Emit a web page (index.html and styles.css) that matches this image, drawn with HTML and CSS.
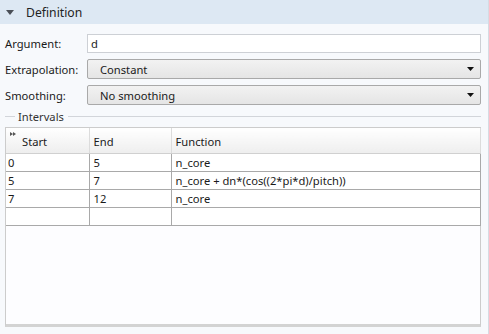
FILE: index.html
```html
<!DOCTYPE html>
<html lang="en">
<head>
    <meta charset="UTF-8">
    <meta name="viewport" content="width=device-width, initial-scale=1.0">
    <title>Definition</title>
    <link rel="stylesheet" href="styles.css">
</head>
<body>
    <div class="panel">
        <div class="section-head">
            <svg class="caret" width="8" height="5" viewBox="0 0 8 5"><path d="M0 0H8L4 5Z" fill="#4a4f57"/></svg>
            <span>Definition</span>
        </div>

        <div class="section-body">
            <div class="field">
                <label>Argument:</label>
                <div class="text-input">d</div>
            </div>
            <div class="field">
                <label>Extrapolation:</label>
                <div class="combo">
                    <span>Constant</span>
                    <svg width="7" height="4" viewBox="0 0 7 4"><path d="M0 0H7L3.5 4Z" fill="#111"/></svg>
                </div>
            </div>
            <div class="field">
                <label>Smoothing:</label>
                <div class="combo">
                    <span>No smoothing</span>
                    <svg width="7" height="4" viewBox="0 0 7 4"><path d="M0 0H7L3.5 4Z" fill="#111"/></svg>
                </div>
            </div>

            <div class="group-title"><span>Intervals</span></div>

            <div class="grid-box">
                <table class="intervals">
                    <thead>
                        <tr>
                            <th class="col-start">
                                <svg class="expand" width="6" height="4" viewBox="0 0 6 4"><path d="M0 0L3 2L0 4Z M3 0L6 2L3 4Z" fill="#555"/></svg>
                                Start
                            </th>
                            <th class="col-end">End</th>
                            <th>Function</th>
                        </tr>
                    </thead>
                    <tbody>
                        <tr><td>0</td><td>5</td><td>n_core</td></tr>
                        <tr><td>5</td><td>7</td><td>n_core + dn*(cos((2*pi*d)/pitch))</td></tr>
                        <tr><td>7</td><td>12</td><td>n_core</td></tr>
                        <tr><td></td><td></td><td></td></tr>
                    </tbody>
                </table>
            </div>
        </div>
    </div>
</body>
</html>
```

FILE: styles.css
```css
html, body {
    margin: 0;
    padding: 0;
}
body {
    font-family: "Segoe UI", "Noto Sans", sans-serif;
    font-size: 11.2px;
    color: #1a1a1a;
    background: #f7f9fc;
}
.panel {
    width: 489px;
    height: 334px;
    box-sizing: border-box;
    border-right: 1px solid #d6dbe3;
    background: #f7f9fc;
}
.section-head {
    height: 24px;
    background: #dde8f3;
    display: flex;
    align-items: center;
    font-size: 12.2px;
    color: #222;
}
.caret {
    margin-left: 6px;
    margin-right: 12px;
}
.section-body {
    padding: 10px 7px 0 5px;
}
.field {
    display: grid;
    grid-template-columns: 82px 1fr;
    align-items: center;
    margin-bottom: 6px;
}
.field:nth-child(3) {
    margin-bottom: 0;
}
.text-input {
    height: 19px;
    box-sizing: border-box;
    border: 1px solid #cdd0d5;
    background: #fff;
    padding-left: 3px;
    line-height: 17px;
}
.combo {
    height: 20px;
    box-sizing: border-box;
    border: 1px solid #a9a9a9;
    border-radius: 2px;
    background: linear-gradient(#f2f2f2, #e5e5e5);
    display: flex;
    align-items: center;
    justify-content: space-between;
    padding: 0 6px 0 12px;
}
.group-title {
    display: flex;
    align-items: center;
    height: 22px;
    color: #333;
}
.group-title::before {
    content: "";
    width: 10px;
    border-top: 1px solid #d2d5da;
    margin-right: 3px;
}
.group-title::after {
    content: "";
    flex: 1;
    border-top: 1px solid #d2d5da;
    margin-left: 4px;
}
.grid-box {
    height: 196px;
    border: 1px solid #cccccc;
    border-bottom: 3px solid #d3d3d3;
    background: #fdfdff;
}
.intervals {
    width: calc(100% + 1px);
    margin-right: -1px;
    border-collapse: collapse;
    table-layout: fixed;
}
.intervals th {
    height: 21px;
    text-align: left;
    vertical-align: bottom;
    font-weight: normal;
    padding: 0 0 4px 4px;
    background: linear-gradient(#ffffff, #eeeeee);
    border-right: 1px solid #dcdcdc;
    border-bottom: 1px solid #d0d0d0;
    position: relative;
}
.intervals th.col-start {
    width: 83px;
    padding-left: 16px;
    box-sizing: border-box;
}
.intervals th.col-end {
    width: 82px;
    box-sizing: border-box;
}
.expand {
    position: absolute;
    left: 4px;
    top: 4px;
}
.intervals td {
    height: 17px;
    padding: 0 0 0 4px;
    background: #fff;
    border-right: 1px solid #a9a9a9;
    border-bottom: 1px solid #a9a9a9;
    white-space: nowrap;
}
.intervals td:first-child {
    padding-left: 2px;
}
```
